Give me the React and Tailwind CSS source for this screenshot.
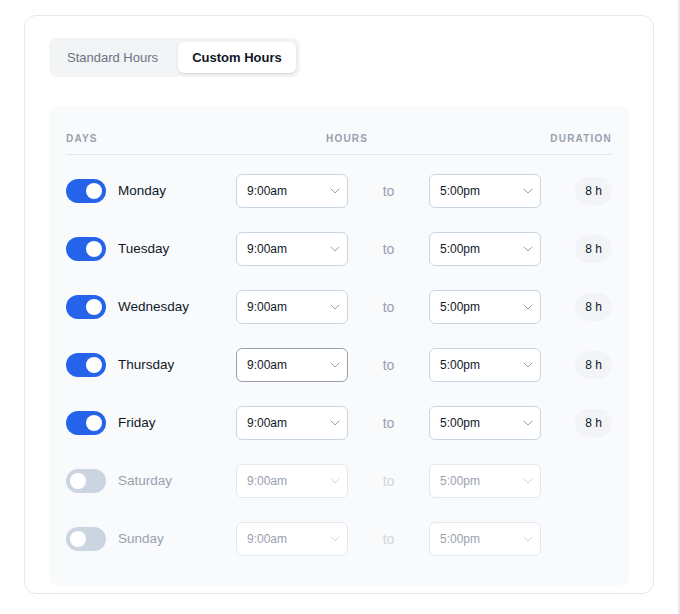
import React from 'react';

const days = [
    { name: 'Monday', on: true },
    { name: 'Tuesday', on: true },
    { name: 'Wednesday', on: true },
    { name: 'Thursday', on: true, focus: true },
    { name: 'Friday', on: true },
    { name: 'Saturday', on: false },
    { name: 'Sunday', on: false },
];

const Chevron = ({ faded }) => (
    <svg width="10" height="6" viewBox="0 0 10 6" fill="none" className={faded ? 'text-gray-300' : 'text-gray-400'}>
        <path d="M1 1l4 4 4-4" stroke="currentColor" strokeWidth="1" strokeLinecap="round" strokeLinejoin="round" />
    </svg>
);

const Select = ({ value, focus, disabled }) => (
    <div
        className={`w-[112px] h-[34px] flex items-center justify-between pl-[10px] pr-[7px] bg-white rounded-md border text-[12px] ${
            disabled ? 'border-slate-200' : focus ? 'border-gray-400' : 'border-slate-300'
        }`}
    >
        <span className={disabled ? 'text-gray-400' : 'text-gray-900'}>{value}</span>
        <Chevron faded={disabled} />
    </div>
);

const Toggle = ({ on }) => (
    <div className={`w-[40px] h-[24px] rounded-full flex items-center px-[4px] ${on ? 'bg-[#2563eb] justify-end' : 'bg-[#cbd5e1] justify-start'}`}>
        <div className="w-[16px] h-[16px] rounded-full bg-white" />
    </div>
);

const DayRow = ({ day }) => (
    <div className="h-[58px] flex items-center">
        <div className="w-[170px] flex items-center gap-3">
            <Toggle on={day.on} />
            <span className={`text-[13.5px] ${day.on ? 'text-gray-900' : 'text-gray-400'}`}>{day.name}</span>
        </div>
        <Select value="9:00am" focus={day.focus} disabled={!day.on} />
        <div className={`w-[81px] text-center text-[14px] ${day.on ? 'text-gray-400' : 'text-gray-300'}`}>to</div>
        <Select value="5:00pm" disabled={!day.on} />
        <div className="flex-1 flex justify-end">
            {day.on && (
                <span className="h-[28px] px-[10px] flex items-center rounded-full bg-gray-100 text-[12px] text-gray-900">8 h</span>
            )}
        </div>
    </div>
);

export default function App() {
    return (
        <div className="min-h-[614px] bg-white flex" style={{ fontFamily: '"Liberation Sans", Arial, sans-serif' }}>
            <div className="flex-1 pt-[15px] pl-[24px] pr-[24px]">
                <div className="border border-gray-200 rounded-xl pt-[22px] pb-[8px] px-[24px]">
                    <div className="inline-flex bg-gray-100 rounded-lg p-[4px] w-[251px]">
                        <div className="w-[125px] h-[31px] flex items-center pl-[14px] text-[13px] text-gray-500">Standard Hours</div>
                        <div className="w-[118px] h-[31px] flex items-center justify-center text-[13px] font-bold text-gray-900 bg-white rounded-md shadow-sm">Custom Hours</div>
                    </div>

                    <div className="mt-[29px] bg-slate-50 rounded-lg px-[17px] pt-[25px] pb-[17px]">
                        <div className="flex items-center pb-[7px] border-b border-gray-200 text-[10px] font-bold tracking-[0.12em] text-gray-400 leading-[16px]">
                            <span className="w-[260px]">DAYS</span>
                            <span>HOURS</span>
                            <span className="ml-auto">DURATION</span>
                        </div>
                        <div className="mt-[7px]">
                            {days.map((day) => (
                                <DayRow key={day.name} day={day} />
                            ))}
                        </div>
                    </div>
                </div>
            </div>
            <div className="w-[2px] bg-gray-200" />
        </div>
    );
}
